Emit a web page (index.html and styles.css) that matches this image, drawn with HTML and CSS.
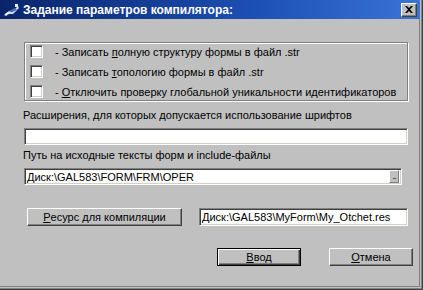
FILE: index.html
```html
<!DOCTYPE html>
<html>
 <head>
  <title>Задание параметров компилятора</title>
  <link rel="stylesheet" href="styles.css">
 </head>
 <body>
  <div class="window">
   <div class="titlebar">
    <svg class="app-icon" width="17" height="16" viewBox="0 0 17 16">
     <path d="M1 13 L6 9 L9 10 L15 4 L16 6 L10 12 L6 12 L3 14 Z" fill="#c8dcf8"/>
     <path d="M6 9 L12 6 L14 8 L9 10 Z" fill="#4a6cc0"/>
     <path d="M2 12 L5 10 L6 11 L3 13 Z" fill="#ffffff"/>
     <rect x="12" y="2" width="3" height="3" fill="#e8f0ff"/>
    </svg>
    <span class="title">Задание параметров компилятора:</span>
    <span class="close-btn">
     <svg width="8" height="7" viewBox="0 0 8 7">
      <path d="M0 0 L2 0 L4 2 L6 0 L8 0 L5 3.5 L8 7 L6 7 L4 5 L2 7 L0 7 L3 3.5 Z" fill="#000"/>
     </svg>
    </span>
   </div>

   <div class="content">
    <div class="groupbox">
     <div class="check-row"><span class="checkbox"></span><span>- Записать <u>п</u>олную структуру формы в файл .str</span></div>
     <div class="check-row"><span class="checkbox"></span><span>- Записать <u>т</u>опологию формы в файл .str</span></div>
     <div class="check-row"><span class="checkbox"></span><span>- <u>О</u>тключить проверку глобальной уникальности идентификаторов</span></div>
    </div>

    <div class="label label-first">Расширения, для которых допускается использование шрифтов</div>
    <div class="edit edit-wide"></div>

    <div class="label">Путь на исходные тексты форм и include-файлы</div>
    <div class="edit edit-path">
     <span class="edit-text">Диск:\GAL583\FORM\FRM\OPER</span>
     <span class="browse-btn">...</span>
    </div>

    <div class="resource-row">
     <div class="button btn-resource"><u>Р</u>есурс для компиляции</div>
     <div class="edit edit-resource"><span class="edit-text">Диск:\GAL583\MyForm\My_Otchet.res</span></div>
    </div>

    <div class="footer">
     <div class="button btn-default"><u>В</u>вод</div>
     <div class="button btn-cancel"><u>О</u>тмена</div>
    </div>
   </div>
  </div>
 </body>
</html>
```

FILE: styles.css
```css
html, body {
    margin: 0;
    padding: 0;
}

body {
    font-family: "Liberation Sans", Arial, sans-serif;
    font-size: 11px;
    color: #000;
    background-color: #c0c0c0;
}

.window {
    width: 423px;
    height: 290px;
    box-sizing: border-box;
    background-color: #c0c0c0;
    border-right: 1px solid #404040;
    border-bottom: 1px solid #404040;
    box-shadow: inset -1px -1px #808080, inset -2px -2px #c0c0c0, inset -3px -3px #808080;
}

.titlebar {
    height: 19px;
    margin-right: 2px;
    display: flex;
    align-items: center;
    background: linear-gradient(to right, #0a246a, #1c4fb4 60%, #3a74d4);
}

.app-icon {
    margin-left: 3px;
    margin-right: 3px;
}

.title {
    color: #fff;
    font-weight: bold;
    font-size: 12px;
    flex: 1;
}

.close-btn {
    width: 16px;
    height: 14px;
    margin-right: 3px;
    box-sizing: border-box;
    background-color: #c0c0c0;
    border-top: 1px solid #fff;
    border-left: 1px solid #fff;
    border-right: 1px solid #404040;
    border-bottom: 1px solid #404040;
    box-shadow: inset -1px -1px #808080;
    display: flex;
    align-items: center;
    justify-content: center;
}

.content {
    padding-left: 24px;
}

.groupbox {
    margin-top: 23px;
    width: 384px;
    height: 59px;
    box-sizing: border-box;
    border: 1px solid #808080;
    box-shadow: inset 1px 1px #fff, 1px 1px #fff;
    padding: 2px 0 0 5px;
    display: flex;
    flex-direction: column;
    gap: 7px;
}

.check-row {
    height: 13px;
    display: flex;
    align-items: center;
    gap: 12px;
}

.checkbox {
    width: 13px;
    height: 13px;
    box-sizing: border-box;
    background-color: #fff;
    border-top: 1px solid #808080;
    border-left: 1px solid #808080;
    border-right: 1px solid #fff;
    border-bottom: 1px solid #fff;
    box-shadow: inset 1px 1px #404040, inset -1px -1px #d4d0c8;
}

.label {
    line-height: 13px;
    margin-top: 4px;
    margin-left: -1px;
}

.label-first {
    margin-top: 8px;
}

.edit {
    box-sizing: border-box;
    background-color: #fff;
    border-top: 1px solid #808080;
    border-left: 1px solid #808080;
    border-right: 1px solid #fff;
    border-bottom: 1px solid #fff;
    box-shadow: inset 1px 1px #404040, inset -1px -1px #d4d0c8;
    display: flex;
    align-items: center;
}

.edit-wide {
    width: 384px;
    height: 17px;
    margin-top: 6px;
}

.edit-path {
    width: 378px;
    height: 17px;
    margin-top: 6px;
    padding-right: 2px;
}

.edit-text {
    flex: 1;
    padding-left: 2px;
    white-space: nowrap;
}

.browse-btn {
    width: 10px;
    height: 13px;
    box-sizing: border-box;
    background-color: #c0c0c0;
    border-top: 1px solid #fff;
    border-left: 1px solid #fff;
    border-right: 1px solid #808080;
    border-bottom: 1px solid #808080;
    font-size: 8px;
    line-height: 8px;
    letter-spacing: -1px;
    display: flex;
    align-items: flex-end;
    justify-content: center;
    padding-bottom: 1px;
}

.resource-row {
    margin-top: 23px;
    display: flex;
    align-items: center;
}

.button {
    box-sizing: border-box;
    height: 18px;
    background-color: #c0c0c0;
    border-top: 1px solid #fff;
    border-left: 1px solid #fff;
    border-right: 1px solid #404040;
    border-bottom: 1px solid #404040;
    box-shadow: inset -1px -1px #808080;
    display: flex;
    align-items: center;
    justify-content: center;
}

.btn-resource {
    width: 155px;
    margin-left: 3px;
}

.edit-resource {
    width: 209px;
    height: 18px;
    margin-left: 17px;
}

.footer {
    margin-top: 22px;
    display: flex;
    padding-left: 193px;
    gap: 28px;
}

.btn-default {
    width: 84px;
    border: 1px solid #000;
    box-shadow: inset 1px 1px #fff, inset -1px -1px #404040, inset -2px -2px #808080;
}

.btn-cancel {
    width: 84px;
}
```
